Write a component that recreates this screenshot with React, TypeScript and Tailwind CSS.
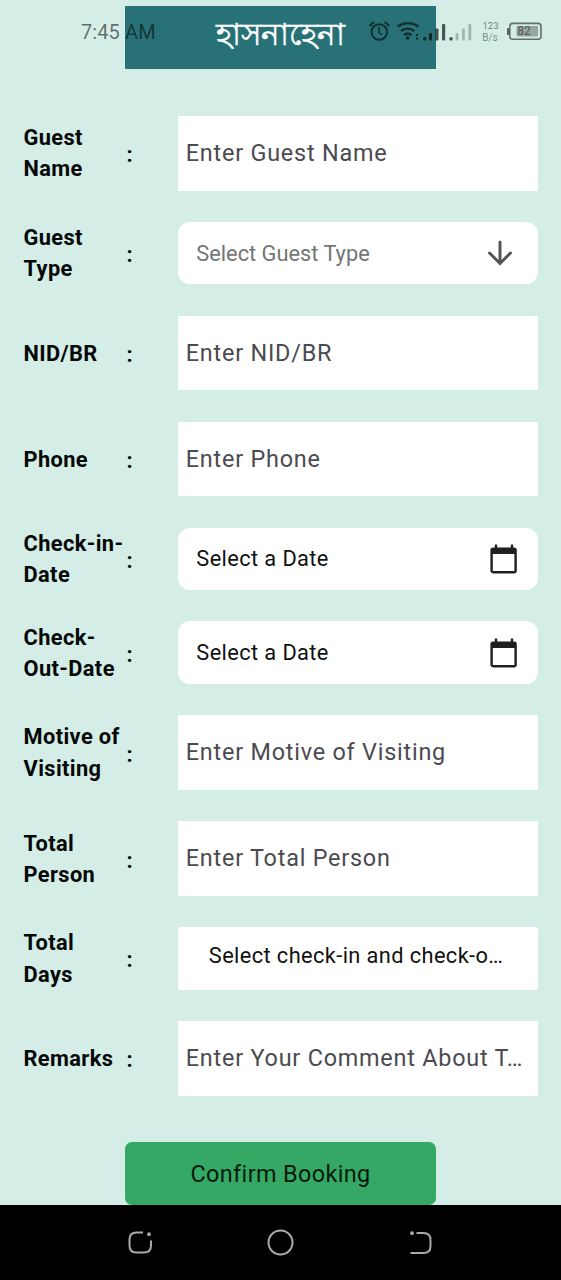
import type { ReactNode } from "react";

type Kind = "input" | "select" | "date" | "days";

interface Field {
  label: ReactNode;
  kind: Kind;
  text: string;
}

const fields: Field[] = [
  { label: <>Guest<br />Name</>, kind: "input", text: "Enter Guest Name" },
  { label: <>Guest<br />Type</>, kind: "select", text: "Select Guest Type" },
  { label: "NID/BR", kind: "input", text: "Enter NID/BR" },
  { label: "Phone", kind: "input", text: "Enter Phone" },
  { label: <>Check-in-<br />Date</>, kind: "date", text: "Select a Date" },
  { label: <>Check-<br />Out-Date</>, kind: "date", text: "Select a Date" },
  { label: <>Motive of<br />Visiting</>, kind: "input", text: "Enter Motive of Visiting" },
  { label: <>Total<br />Person</>, kind: "input", text: "Enter Total Person" },
  { label: <>Total<br />Days</>, kind: "days", text: "Select check-in and check-o…" },
  { label: "Remarks", kind: "input", text: "Enter Your Comment About T…" },
];

function ArrowDown() {
  return (
    <svg className="mr-[24.5px] h-[26px] w-[26px]" viewBox="0 0 26 26" fill="none" stroke="#555" strokeWidth="3" strokeLinecap="round">
      <path d="M13 2v21.5M2.5 13l10.5 10.5 10.5-10.5" />
    </svg>
  );
}

function Calendar() {
  return (
    <svg className="mr-[20px] h-[30px] w-[28px]" viewBox="0 0 28 30" fill="none">
      <path d="M6 0.5V5M22 0.5V5" stroke="#202020" strokeWidth="2.4" />
      <rect x="1.6" y="4.6" width="24" height="23.6" rx="1.5" stroke="#202020" strokeWidth="2.4" />
      <rect x="1.5" y="4" width="24.4" height="6" fill="#202020" />
    </svg>
  );
}

function Control({ kind, text }: { kind: Kind; text: string }) {
  if (kind === "input") {
    return (
      <div className="flex h-[74.8px] w-[360px] items-center bg-white pl-[8px] text-[23.4px] leading-[36px] tracking-[0.78px] whitespace-nowrap text-[#4b4a50]">
        {text}
      </div>
    );
  }
  if (kind === "select") {
    return (
      <div className="flex h-[62.4px] w-[360px] items-center justify-between rounded-[12px] bg-white pl-[18.5px] text-[21.8px] text-[#757575]">
        <span className="pt-[2px]">{text}</span>
        <ArrowDown />
      </div>
    );
  }
  if (kind === "date") {
    return (
      <div className="flex h-[62.4px] w-[360px] items-center justify-between rounded-[12px] bg-white pl-[18.5px] text-[21.8px] tracking-[0.39px] text-[#111]">
        <span className="pt-[2px]">{text}</span>
        <Calendar />
      </div>
    );
  }
  return (
    <div className="flex h-[62.4px] w-[360px] items-center rounded-[3px] bg-white pb-[3px] pl-[31px] text-[21.8px] tracking-[0.39px] whitespace-nowrap text-[#111]">
      {text}
    </div>
  );
}

function StatusBar() {
  return (
    <div className="absolute top-0 left-0 h-[62px] w-[561px]">
      <span className="absolute top-[19px] left-[81px] text-[20px] leading-[26px] tracking-[0.1px] whitespace-nowrap text-black/55">7:45 AM</span>
      <svg className="absolute top-0 left-[360px] h-[62px] w-[201px]" viewBox="360 0 201 62" fill="none">
        <g stroke="#000" strokeOpacity="0.6" strokeWidth="2">
          <circle cx="379.3" cy="32" r="7.8" />
          <path d="M379 27v5.5l3 2.5" strokeWidth="1.6" />
          <path d="M369.8 26.2q1.5-3 4.4-4M389 26.2q-1.5-3-4.4-4" />
          <path d="M397.5 26.5q10.5-6.6 21 0M401 31q6.5-4.6 13.5 0M404 35q3.5-2.5 7.5 0" strokeWidth="2.3" />
        </g>
        <g fill="#000" fillOpacity="0.65">
          <circle cx="407.6" cy="38" r="1.8" />
          <rect x="416" y="34" width="2" height="2" />
          <rect x="416" y="37.5" width="2" height="2" />
          <rect x="423" y="37" width="3.5" height="3.5" rx="1.5" />
          <rect x="429" y="33" width="3" height="7.5" rx="1" />
          <rect x="435.5" y="28.5" width="3" height="12" rx="1" />
          <rect x="442" y="24" width="3.2" height="16.5" rx="1" />
          <rect x="449.3" y="37" width="3.5" height="3.5" rx="1.5" />
        </g>
        <g fill="#000" fillOpacity="0.24">
          <rect x="455.6" y="33" width="2.8" height="7.5" rx="1" />
          <rect x="462" y="28.5" width="2.8" height="12" rx="1" />
          <rect x="468.4" y="24" width="2.8" height="16.5" rx="1" />
        </g>
        <rect x="509.8" y="23.4" width="31.2" height="15.8" rx="3" stroke="#646e6a" strokeWidth="1.6" />
        <rect x="507" y="28" width="2.6" height="7" rx="1" fill="#59625f" />
        <rect x="516.5" y="26" width="21.5" height="10.5" rx="1" fill="#99a5a1" />
      </svg>
      <span className="absolute top-[19px] left-[482px] w-[17px] text-center text-[9.5px] leading-[13px] text-black/50">123</span>
      <span className="absolute top-[31px] left-[480px] w-[20px] text-center text-[10px] leading-[13px] text-black/45">B/s</span>
      <span className="absolute top-[25px] left-[516px] w-[16px] text-center text-[12px] leading-[13px] text-[#4d5553]">82</span>
    </div>
  );
}

function NavBar() {
  return (
    <div className="mt-auto flex h-[75px] shrink-0 bg-black">
      <svg className="h-[75px] w-[561px]" viewBox="0 1205 561 75" fill="none" stroke="#aaa" strokeWidth="2">
        <path d="M143 1232.5h-6.500q-7 0-7 7v6q0 7 7 7h7.500q7 0 7-7v-5" />
        <circle cx="149" cy="1234.2" r="1.9" fill="#aaa" stroke="none" />
        <circle cx="280.5" cy="1242.5" r="12" />
        <path d="M416.5 1233h7q7 0 7 7v6q0 7-7 7h-13" />
        <circle cx="412" cy="1233.2" r="1.9" fill="#aaa" stroke="none" />
      </svg>
    </div>
  );
}

export default function App() {
  return (
    <div className="relative flex h-[1280px] w-[561px] flex-col overflow-hidden bg-[#d4ede6] font-['Roboto','Noto_Sans',sans-serif]">
      <header className="mx-auto mt-[6.3px] flex h-[62.3px] w-[311.5px] shrink-0 items-center justify-center bg-[#287277] pb-[5px] text-[31.2px] leading-[40px] whitespace-nowrap text-white [-webkit-text-stroke:0.5px_white]">
        হাসনাহেনা
      </header>
      <main className="mt-[47.2px] flex flex-col gap-[31.27px] pl-[23.5px]">
        {fields.map((field, i) => (
          <div key={i} className="flex items-center">
            <div className="mt-[0.3px] -mb-[0.3px] w-[103px] text-[21.8px] leading-[31.2px] font-bold tracking-[0.39px] whitespace-nowrap text-[#050807]">
              {field.label}
            </div>
            <div className="w-[51.3px] pt-[3.5px] text-[21.8px] leading-[31.2px] font-bold text-[#050807]">:</div>
            <Control kind={field.kind} text={field.text} />
          </div>
        ))}
      </main>
      <button className="mx-auto mt-[46.8px] h-[62.3px] w-[311.5px] shrink-0 rounded-[7px] bg-[#36a866] pt-[3px] text-[23.4px] tracking-[0.39px] text-[#031a0c]">
        Confirm Booking
      </button>
      <NavBar />
      <StatusBar />
    </div>
  );
}
